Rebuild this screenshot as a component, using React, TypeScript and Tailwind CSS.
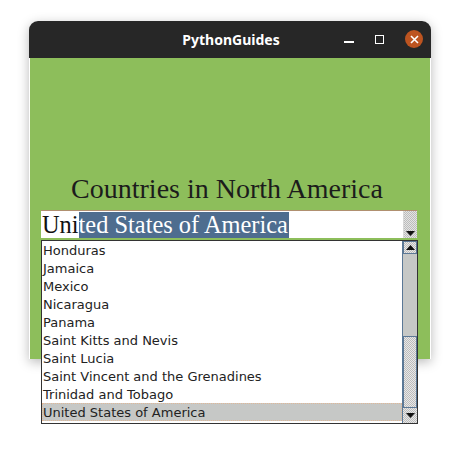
const countries = [
  "Honduras",
  "Jamaica",
  "Mexico",
  "Nicaragua",
  "Panama",
  "Saint Kitts and Nevis",
  "Saint Lucia",
  "Saint Vincent and the Grenadines",
  "Trinidad and Tobago",
  "United States of America",
];

const UpArrow = () => (
  <svg width="9" height="5" viewBox="0 0 9 5">
    <polygon points="0,5 9,5 4.5,0" fill="#111" />
  </svg>
);

const DownArrow = () => (
  <svg width="9" height="5" viewBox="0 0 9 5">
    <polygon points="0,0 9,0 4.5,5" fill="#111" />
  </svg>
);

const App = () => {
  return (
    <div className="relative w-[460px] h-[449px] bg-white overflow-hidden">
      {/* <!-- Window --> */}
      <div className="absolute left-[29px] top-[21px] w-[402px] flex flex-col rounded-t-[9px] overflow-hidden shadow-[0_3px_12px_rgba(0,0,0,0.28)]">
        <div className="h-[37px] bg-[#272727] flex items-center relative">
          <div className="flex-1 text-center text-white font-bold text-[14px] pl-[2px] font-['Noto_Sans',sans-serif]">
            PythonGuides
          </div>
          <div className="absolute right-[8px] top-[9px] flex items-center gap-[21px]">
            <div className="w-[10px] h-[1.5px] bg-white mt-[6px]"></div>
            <div className="w-[9px] h-[9px] border border-white"></div>
            <div className="w-[18px] h-[18px] rounded-full bg-[#bd5420] flex items-center justify-center">
              <svg width="9" height="9" viewBox="0 0 9 9">
                <path d="M1 1 L8 8 M8 1 L1 8" stroke="white" strokeWidth="1.6" />
              </svg>
            </div>
          </div>
        </div>
        <div className="h-[301px] bg-[#8dbe5b] mx-[1px] flex flex-col items-center">
          <div className="mt-[114px] mr-[6px] text-[28px] leading-[34px] text-[#1c1c1c] font-['Liberation_Serif',serif]">
            Countries in North America
          </div>
          {/* <!-- Combobox entry --> */}
          <div className="mt-[4px] mr-[2px] w-[376px] h-[28px] bg-white border-t border-[#b09070] flex">
            <div className="flex-1 flex items-center pl-[1px] text-[24.4px] leading-[26px] font-['Liberation_Serif',serif] text-[#111]">
              <span>Uni</span>
              <span className="bg-[#4e6d8f] text-white pr-[1px]">ted States of America</span>
            </div>
            <div className="w-[14px] flex flex-col justify-end items-center pb-[2px] bg-[repeating-conic-gradient(#bcbcbc_0_25%,#e4e4e4_0_50%)] bg-[length:2px_2px] border-l border-[#d8d8d8]">
              <DownArrow />
            </div>
          </div>
        </div>
      </div>

      {/* <!-- Dropdown popup --> */}
      <div className="absolute left-[41px] top-[240px] w-[377px] h-[184px] bg-white border border-[#333] flex font-['DejaVu_Sans',sans-serif] text-[13px] text-[#222]">
        <div className="flex-1 flex flex-col">
          {countries.map((c, i) => (
            <div
              key={c}
              className={
                i === countries.length - 1
                  ? "h-[18px] leading-[17px] bg-[#c6c8c6] border border-dotted border-[#e0b898]"
                  : "h-[18px] leading-[17px] border border-transparent"
              }
            >
              {c}
            </div>
          ))}
        </div>
        <div className="w-[15px] flex flex-col border-l border-[#5b7896] bg-[#c6c8c6]">
          <div className="h-[13px] flex items-center justify-center bg-[repeating-conic-gradient(#bcbcbc_0_25%,#e8e8e8_0_50%)] bg-[length:2px_2px] border border-[#5b7896]">
            <UpArrow />
          </div>
          <div className="h-[82px]"></div>
          <div className="flex-1 bg-[repeating-conic-gradient(#bcbcbc_0_25%,#e8e8e8_0_50%)] bg-[length:2px_2px] border border-[#5b7896]"></div>
          <div className="h-[15px] flex items-center justify-center bg-[repeating-conic-gradient(#bcbcbc_0_25%,#e8e8e8_0_50%)] bg-[length:2px_2px]">
            <DownArrow />
          </div>
        </div>
      </div>
    </div>
  );
};

export default App;
